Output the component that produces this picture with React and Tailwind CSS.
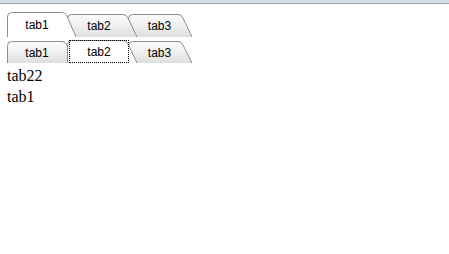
import React from "react";

function TabShape({ h, tw, active }) {
  const slant = 9;
  const w = tw + slant + 1;
  const d = `M0.5,${h} L0.5,4.5 Q0.5,0.5 4.5,0.5 L${tw - 5},0.5 Q${tw - 1.5},0.5 ${tw},4 L${tw + slant},${h}`;
  return (
    <svg
      className="absolute left-0 top-0 pointer-events-none"
      width={w}
      height={h}
      viewBox={`0 0 ${w} ${h}`}
    >
      <defs>
        <linearGradient id="tabgrad" x1="0" y1="0" x2="0" y2="1">
          <stop offset="0" stopColor="#fbfbfb" />
          <stop offset="0.5" stopColor="#f0f0f0" />
          <stop offset="1" stopColor="#dedede" />
        </linearGradient>
      </defs>
      <path d={d} fill={active ? "#ffffff" : "url(#tabgrad)"} stroke="#8c8c8c" strokeWidth="1" />
    </svg>
  );
}

function Tab({ label, active, focus, z, h, tw, tx }) {
  return (
    <div className={`relative shrink-0 ${z}`} style={{ width: tw, height: h }}>
      <TabShape h={h} tw={tw} active={active} />
      {focus && (
        <div className="absolute left-[2px] top-0 w-[60px] bottom-0 border border-dotted border-black" />
      )}
      <div className="relative h-full flex items-center justify-center" style={{ width: tx }}>
        <span className="pt-[1px] text-[12px] text-black leading-none font-['Liberation_Sans',Arial,sans-serif]">
          {label}
        </span>
      </div>
    </div>
  );
}

export default function App() {
  return (
    <div className="w-[449px] h-[254px] bg-white overflow-hidden">
      <div className="h-[4px] bg-[#d3deeb] border-b border-[#9aa3ae]" />
      <div className="pl-[7px] pt-[8px] flex flex-col">
        <div className="flex items-end h-[25px]">
          <Tab label="tab1" active z="z-30" h={25} tw={60} tx={60} />
          <Tab label="tab2" z="z-20" h={23} tw={61} tx={64} />
          <Tab label="tab3" z="z-10" h={23} tw={55} tx={63} />
        </div>
        <div className="flex items-end h-[23px] mt-[3px]">
          <Tab label="tab1" z="z-20" h={22} tw={60} tx={60} />
          <Tab label="tab2" active focus z="z-30" h={23} tw={61} tx={64} />
          <Tab label="tab3" z="z-10" h={22} tw={55} tx={63} />
        </div>
      </div>
      <div className="pl-[7px] pt-[2px] font-['Liberation_Serif','Times_New_Roman',serif] text-[16px] leading-[21px] text-black">
        <div>tab22</div>
        <div>tab1</div>
      </div>
    </div>
  );
}
